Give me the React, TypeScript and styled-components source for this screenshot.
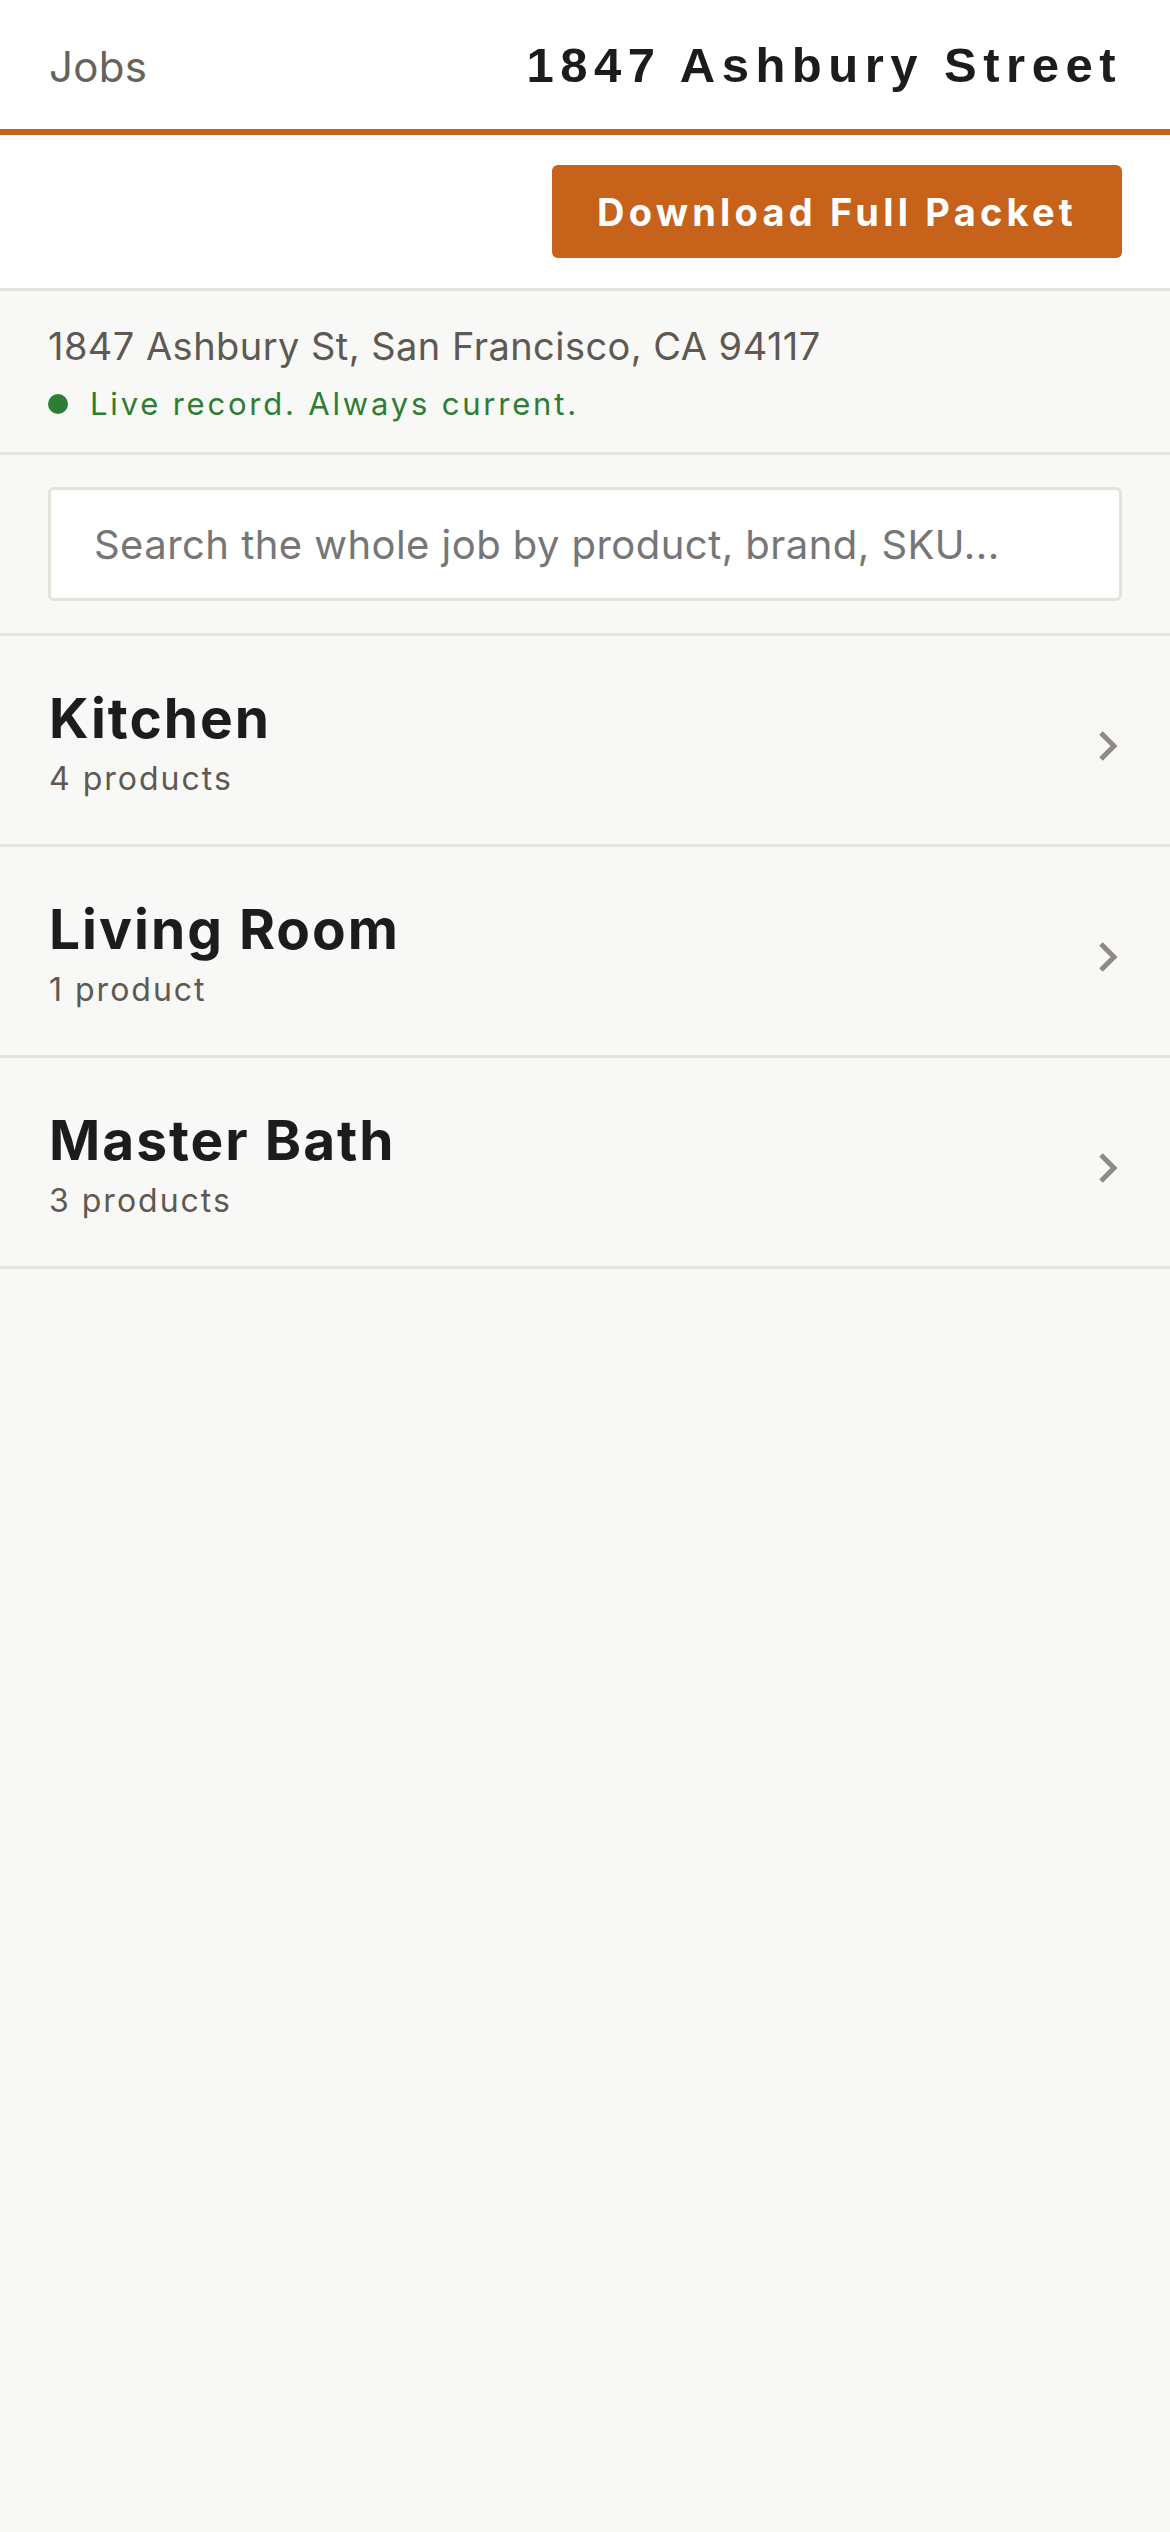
import React from 'react'
import styled, { createGlobalStyle } from 'styled-components'

const GlobalStyle = createGlobalStyle`
  html, body {
    margin: 0;
    padding: 0;
    background: #f8f8f6;
  }
  body {
    font-family: Inter, "Noto Sans", "Liberation Sans", sans-serif;
    -webkit-font-smoothing: antialiased;
  }
  * {
    box-sizing: border-box;
  }
`

const rooms = [
  { id: 'kitchen', name: 'Kitchen', count: 4 },
  { id: 'living', name: 'Living Room', count: 1 },
  { id: 'bath', name: 'Master Bath', count: 3 }
]

const ChevronRight = () => (
  <svg width="20" height="30" viewBox="0 0 20 30" fill="none">
    <polyline points="3,2 16,15 3,28" stroke="#8f8b84" strokeWidth="5" strokeLinejoin="miter" />
  </svg>
)

const App = () => {
  return (
    <Page>
      <GlobalStyle />
      <Header>
        <BackLink>Jobs</BackLink>
        <JobTitle>1847 Ashbury Street</JobTitle>
      </Header>

      <ActionBar>
        <PrimaryButton type="button">Download Full Packet</PrimaryButton>
      </ActionBar>

      <AddressSection>
        <Address>1847 Ashbury St, San Francisco, CA 94117</Address>
        <LiveStatus>
          <LiveDot />
          Live record. Always current.
        </LiveStatus>
      </AddressSection>

      <SearchSection>
        <SearchInput placeholder="Search the whole job by product, brand, SKU..." />
      </SearchSection>

      <RoomList>
        {rooms.map((room) => (
          <RoomRow key={room.id}>
            <RoomText>
              <RoomName>{room.name}</RoomName>
              <RoomMeta>
                {room.count} {room.count === 1 ? 'product' : 'products'}
              </RoomMeta>
            </RoomText>
            <ChevronWrap>
              <ChevronRight />
            </ChevronWrap>
          </RoomRow>
        ))}
      </RoomList>
    </Page>
  )
}

const Page = styled.div`
  min-height: 2532px;
  background: #f8f8f6;
`

const Header = styled.header`
  display: flex;
  align-items: baseline;
  justify-content: space-between;
  height: 135px;
  padding: 41px 48px 0 49px;
  background: #ffffff;
  border-bottom: 6px solid #c6621a;
`

const BackLink = styled.span`
  font-size: 42px;
  line-height: 48px;
  letter-spacing: 0.3px;
  color: #67625b;
`

const JobTitle = styled.h1`
  margin: 0;
  font-family: "Liberation Sans", Arial, sans-serif;
  font-size: 49px;
  line-height: 48px;
  font-weight: 700;
  letter-spacing: 6.5px;
  color: #1c1c1c;
`

const ActionBar = styled.div`
  display: flex;
  justify-content: flex-end;
  padding: 30px 48px 30px;
  background: #ffffff;
  border-bottom: 3px solid #e5e2db;
`

const PrimaryButton = styled.button`
  height: 93px;
  width: 570px;
  padding: 0;
  border: none;
  border-radius: 6px;
  background: #c6621a;
  color: #ffffff;
  font-family: Inter, "Liberation Sans", sans-serif;
  font-size: 38px;
  font-weight: 700;
  letter-spacing: 4.2px;
  cursor: pointer;
`

const AddressSection = styled.section`
  display: flex;
  flex-direction: column;
  gap: 13px;
  padding: 30px 48px 28px;
  border-bottom: 3px solid #e5e2db;
`

const Address = styled.div`
  font-size: 38px;
  line-height: 50px;
  letter-spacing: 0.45px;
  color: #5e5953;
`

const LiveStatus = styled.div`
  display: flex;
  align-items: center;
  gap: 22px;
  font-size: 31px;
  line-height: 40px;
  letter-spacing: 2.8px;
  color: #2e7d32;
`

const LiveDot = styled.span`
  width: 20px;
  height: 20px;
  border-radius: 50%;
  background: #2e7d32;
  flex-shrink: 0;
`

const SearchSection = styled.div`
  padding: 32px 48px 32px;
  border-bottom: 3px solid #e5e2db;
`

const SearchInput = styled.input`
  display: block;
  width: 100%;
  height: 114px;
  padding: 0 43px;
  border: 3px solid #e5e2db;
  border-radius: 6px;
  background: #ffffff;
  font-family: Inter, "Liberation Sans", sans-serif;
  font-size: 40px;
  letter-spacing: 0.45px;
  color: #1c1c1c;
  outline: none;

  &::placeholder {
    color: #767676;
  }
`

const RoomList = styled.div`
  display: flex;
  flex-direction: column;
`

const RoomRow = styled.div`
  display: flex;
  align-items: center;
  justify-content: space-between;
  height: 211px;
  padding: 4px 52px 0 49px;
  border-bottom: 3px solid #e5e2db;
  cursor: pointer;
`

const RoomText = styled.div`
  display: flex;
  flex-direction: column;
  gap: 9px;
`

const RoomName = styled.div`
  font-size: 55px;
  line-height: 64px;
  font-weight: 700;
  letter-spacing: 2px;
  color: #1c1c1c;
`

const RoomMeta = styled.div`
  font-size: 32px;
  line-height: 39px;
  letter-spacing: 2px;
  color: #5e5953;
`

const ChevronWrap = styled.div`
  display: flex;
  margin-top: 8px;
`

export default App
